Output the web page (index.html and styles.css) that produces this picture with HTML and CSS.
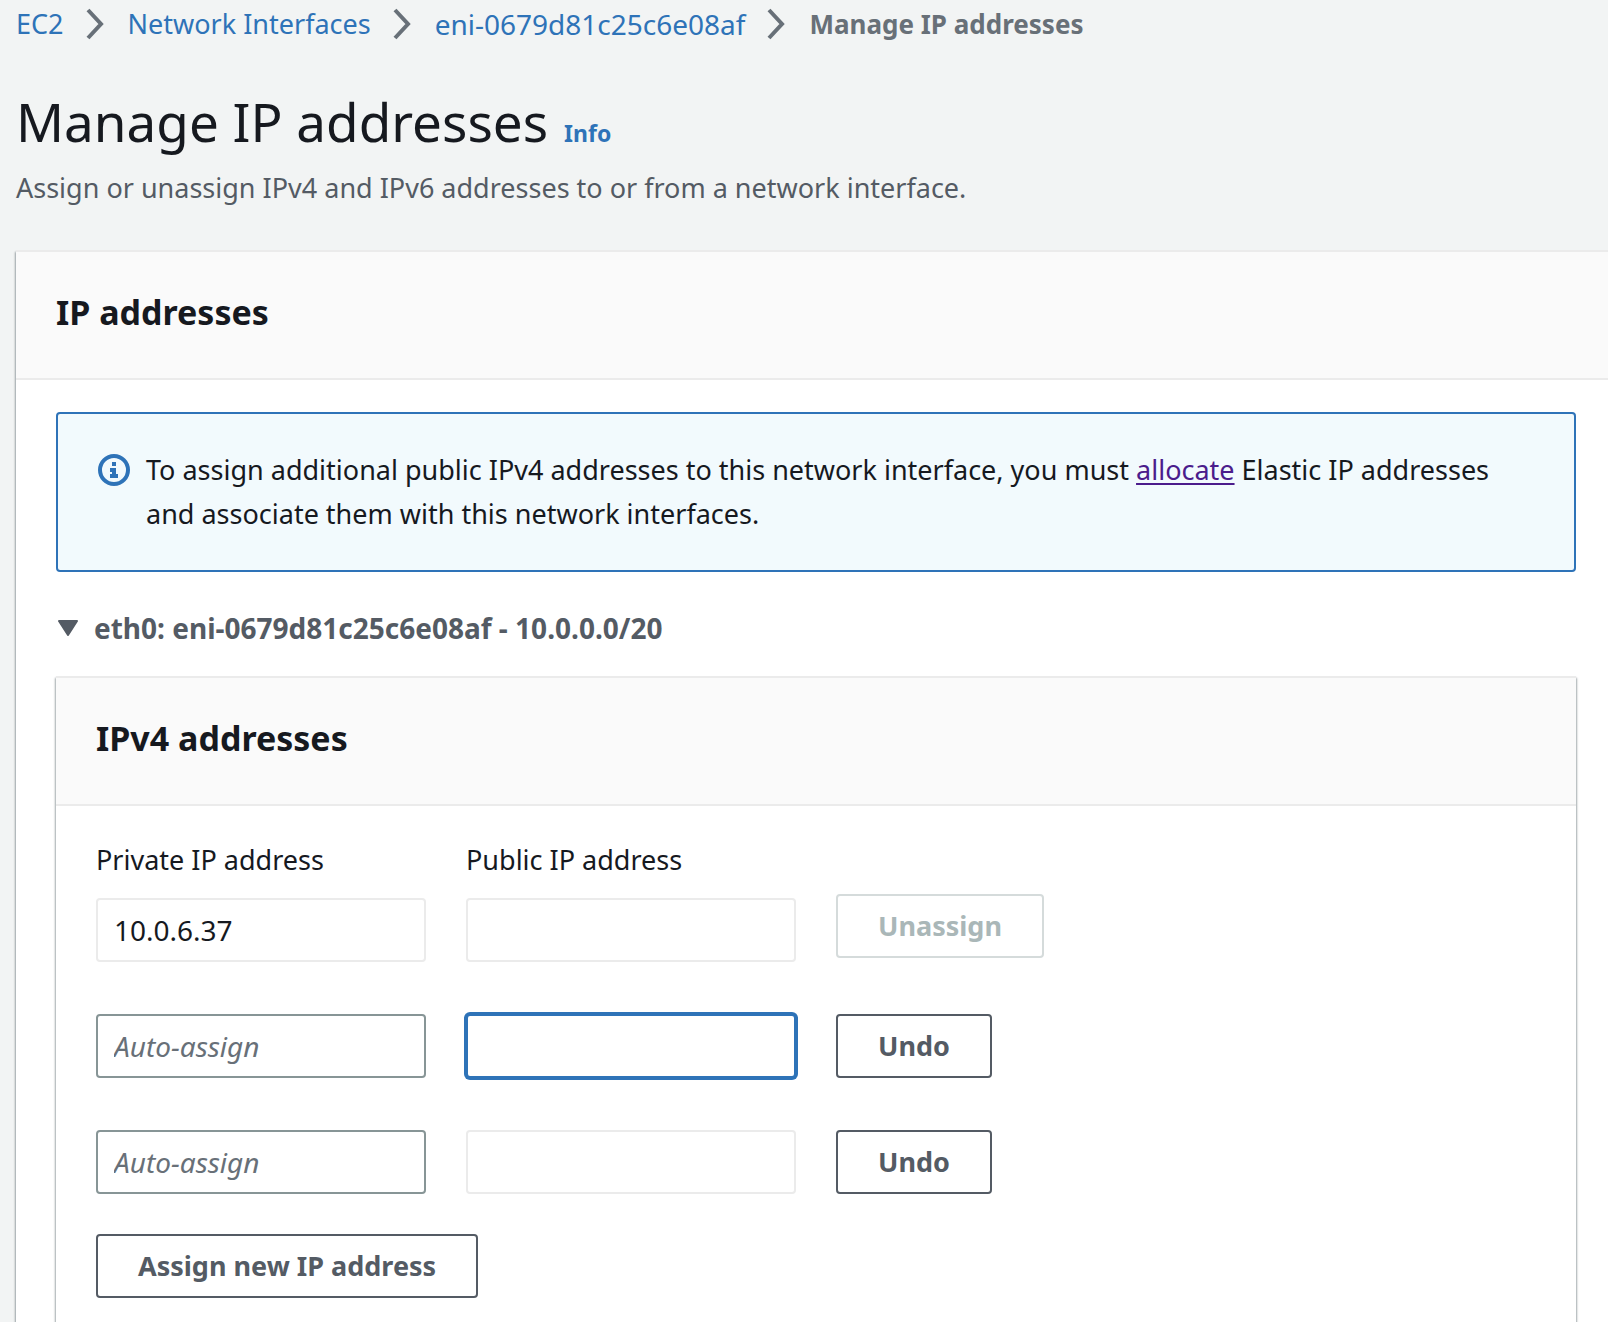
FILE: index.html
```html
<!DOCTYPE html>
<html lang="en">
<head>
<meta charset="utf-8">
<meta name="viewport" content="width=device-width, initial-scale=1">
<title>Manage IP addresses</title>
<link rel="stylesheet" href="styles.css">
</head>
<body>
<div class="page">
  <nav aria-label="Breadcrumbs">
    <ol class="breadcrumbs">
      <li><a href="#ec2">EC2</a><svg class="chevron" viewBox="0 0 18 32" aria-hidden="true"><path d="M2 2l13 14L2 30"/></svg></li>
      <li><a href="#interfaces">Network Interfaces</a><svg class="chevron" viewBox="0 0 18 32" aria-hidden="true"><path d="M2 2l13 14L2 30"/></svg></li>
      <li><a class="resource" href="#eni">eni-0679d81c25c6e08af</a><svg class="chevron" viewBox="0 0 18 32" aria-hidden="true"><path d="M2 2l13 14L2 30"/></svg></li>
      <li class="current" aria-current="page">Manage IP addresses</li>
    </ol>
  </nav>
  <header class="page-header">
    <div class="title-row">
      <h1>Manage IP addresses</h1>
      <a class="info" href="#info">Info</a>
    </div>
    <p>Assign or unassign IPv4 and IPv6 addresses to or from a network interface.</p>
  </header>
  <main class="panel outer">
    <div class="panel-header"><h2>IP addresses</h2></div>
    <div class="outer-body">
      <div class="alert">
        <svg class="alert-icon" viewBox="0 0 32 32" aria-hidden="true"><circle cx="16" cy="16" r="14" fill="none" stroke="currentColor" stroke-width="4"/><path d="M14 8h4v4h-4zM12 14h6v6h2v4h-8v-4h2v-2h-2z" fill="currentColor"/></svg>
        <p>To assign additional public IPv4 addresses to this network interface, you must <a href="#allocate">allocate</a> Elastic IP addresses and associate them with this network interfaces.</p>
      </div>
      <button class="expander" type="button" aria-expanded="true">
        <svg class="caret" viewBox="0 0 20 16" aria-hidden="true"><path d="M1 1h18l-9 14z"/></svg>
        <span>eth0: eni-0679d81c25c6e08af - 10.0.0.0/20</span>
      </button>
      <section class="panel inner">
        <div class="panel-header"><h2>IPv4 addresses</h2></div>
        <form class="ip-form">
          <div class="ip-row">
            <div class="field">
              <label for="private-1">Private IP address</label>
              <input id="private-1" class="readonly" type="text" value="10.0.6.37" readonly>
            </div>
            <div class="field">
              <label for="public-1">Public IP address</label>
              <input id="public-1" class="readonly" type="text" readonly>
            </div>
            <button class="btn below-label" type="button" disabled>Unassign</button>
          </div>
          <div class="ip-row">
            <input type="text" placeholder="Auto-assign" aria-label="Private IP address">
            <input class="active" type="text" aria-label="Public IP address" readonly>
            <button class="btn" type="button">Undo</button>
          </div>
          <div class="ip-row">
            <input type="text" placeholder="Auto-assign" aria-label="Private IP address">
            <input class="readonly" type="text" aria-label="Public IP address" readonly>
            <button class="btn" type="button">Undo</button>
          </div>
          <button class="btn assign" type="button">Assign new IP address</button>
        </form>
      </section>
    </div>
  </main>
</div>
</body>
</html>
```
FILE: styles.css
```css
* { box-sizing: border-box; }

body {
  margin: 0;
  background: #f2f4f4;
  color: #16191f;
  font-family: "Noto Sans", "Open Sans", sans-serif;
  font-size: 27px;
  line-height: 44px;
}

h1, h2, p { margin: 0; }
a { color: #2e73b8; text-decoration: none; }
input, button { font: inherit; color: inherit; }

.page {
  display: flex;
  flex-direction: column;
  min-height: 100vh;
  padding-left: 16px;
}

.breadcrumbs {
  display: flex;
  flex-wrap: wrap;
  margin: 0;
  padding: 2px 0 0;
  list-style: none;
}
.breadcrumbs li { display: flex; align-items: center; }
.breadcrumbs .resource { font-size: 28px; }
.breadcrumbs .current { color: #687078; font-size: 26px; font-weight: 700; }
.chevron {
  width: 18px;
  height: 32px;
  margin: 0 24px 0 22px;
  fill: none;
  stroke: #687078;
  stroke-width: 4;
}

.page-header { padding: 40px 0; }
.page-header p { margin-top: 8px; color: #545b64; }
.title-row { display: flex; align-items: baseline; gap: 16px; }
h1 { font-size: 53px; font-weight: 400; line-height: 72px; }
.info { font-size: 23px; font-weight: 700; }

.panel {
  display: flex;
  flex-direction: column;
  flex: 1;
  border-top: 2px solid #ebebeb;
  background: #fff;
  box-shadow: 0 2px 2px rgba(0, 28, 36, 0.3), 1px 2px 2px rgba(0, 28, 36, 0.25), -1px 2px 2px rgba(0, 28, 36, 0.25);
}
.panel-header {
  padding: 38px 40px 44px;
  border-bottom: 2px solid #ebebeb;
  background: #fafafa;
}
h2 { font-size: 34px; font-weight: 700; line-height: 44px; }

.outer-body {
  display: flex;
  flex-direction: column;
  flex: 1;
  padding: 32px 32px 0 40px;
}

.alert {
  display: flex;
  align-items: flex-start;
  gap: 16px;
  padding: 34px 40px;
  border: 2px solid #2e73b8;
  border-radius: 4px;
  background: #f2fafd;
}
.alert-icon { flex: none; width: 32px; height: 32px; margin-top: 6px; color: #2e73b8; }
.alert a { color: #4b1c8c; text-decoration: underline; text-decoration-thickness: 2px; text-underline-offset: 3px; }

.expander {
  display: flex;
  align-items: center;
  align-self: flex-start;
  gap: 16px;
  margin: 34px 0 26px;
  padding: 0 2px;
  border: 0;
  background: none;
  color: #545b64;
  font-size: 28px;
  font-weight: 700;
}
.caret { width: 20px; height: 16px; fill: currentColor; stroke: currentColor; stroke-width: 2; stroke-linejoin: round; }

.ip-form { padding: 32px 40px 22px; }
.ip-row {
  display: grid;
  grid-template-columns: 330px 330px auto;
  align-items: start;
  justify-content: start;
  gap: 40px;
  margin-bottom: 52px;
}
.field { display: flex; flex-direction: column; gap: 16px; }
.ip-form input {
  width: 100%;
  height: 64px;
  padding: 0 16px;
  border: 2px solid #879596;
  border-radius: 4px;
  background: #fff;
  font-size: 28px;
  outline: 0;
}
.ip-form input::placeholder { color: #687078; font-style: italic; opacity: 1; }
.ip-form .readonly { border-color: #ebebeb; }
.ip-form .active { border-color: #2e73b8; box-shadow: 0 0 0 2px #2e73b8; }

.btn {
  height: 64px;
  padding: 0 40px;
  border: 2px solid #545b64;
  border-radius: 4px;
  background: #fff;
  color: #545b64;
  font-weight: 700;
}
.btn:disabled { border-color: #d5dbdb; color: #aab7b8; }
.below-label { margin-top: 56px; }
.assign { display: block; margin-top: -12px; }
```
